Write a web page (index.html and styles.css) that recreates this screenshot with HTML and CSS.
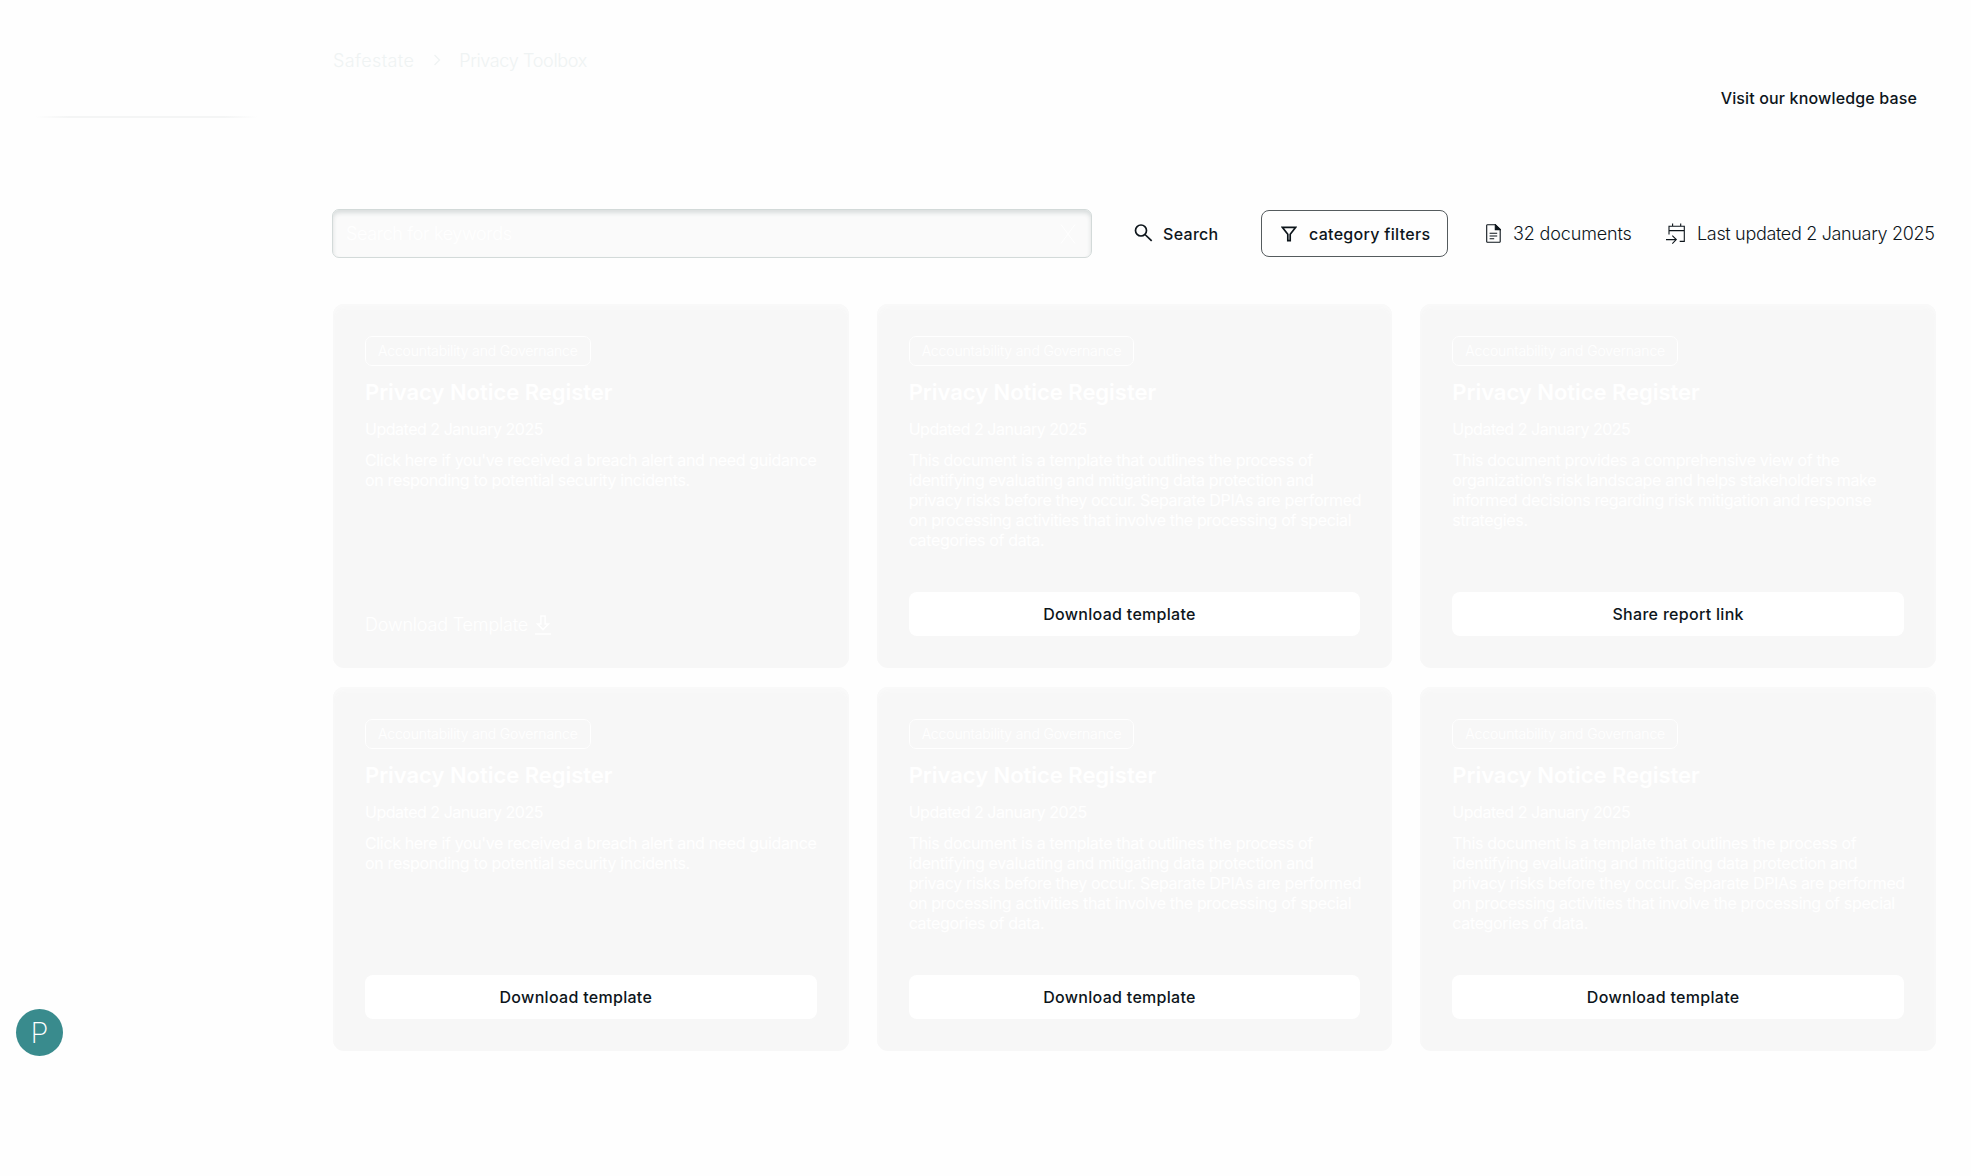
FILE: index.html
```
<!DOCTYPE html>
<html lang="en">
	<head>
		<meta charset="utf-8"/>
		<title>Privacy Toolbox</title>
		<link rel="stylesheet" href="styles.css">
	</head>
	<body>
		<aside class="sidebar">
			<div class="divider"></div>
			<div class="avatar">P</div>
		</aside>
		<main>
			<nav class="breadcrumb">
				<a class="crumb">Safestate</a>
				<svg class="chevron" width="8" height="12" viewBox="0 0 8 12"><path d="M1.5 1l5 5-5 5"/></svg>
				<a class="crumb current">Privacy Toolbox</a>
			</nav>
			<div class="knowledge"><a>Visit our knowledge base</a></div>

			<div class="toolbar">
				<div class="search">
					<span>Search for keywords</span>
					<svg width="16" height="20" viewBox="0 0 16 20"><path d="M1 .5l14 19M15 .5L1 19.5"/></svg>
				</div>
				<button class="search-btn" type="button">
					<svg width="19" height="19" viewBox="0 0 19 19"><circle cx="7" cy="6.5" r="5.5"/><path d="M11 10.5l6.7 6.4"/></svg>
					<span>Search</span>
				</button>
				<button class="filter-btn" type="button">
					<svg width="16" height="16" viewBox="0 0 16 16"><path d="M1.3 1.3h13.4L9.2 8.2v6.5H6.8V8.2z"/></svg>
					<span>category filters</span>
				</button>
				<div class="info docs">
					<svg width="15" height="19" viewBox="0 0 15 19"><path d="M1.6.7h7.7l4.9 4.9v11.8a.9.9 0 0 1-.9.9H1.6a.9.9 0 0 1-.9-.9V1.6a.9.9 0 0 1 .9-.9zM3.6 9.2h7.6M3.6 12h7.6M3.6 14.8h4.6"/><path class="fill" d="M9.3.7v4.9h4.9z"/></svg>
					<span>32 documents</span>
				</div>
				<div class="info updated">
					<svg width="19" height="21" viewBox="0 0 19 21"><path d="M3 11.5V3.2h15.3v15.2h-4.6M3 7.6h15.3M6.6 3.2V.5M14.7 3.2V.5M0 16.6h10.2M6.3 12.6l4 4-4 4"/></svg>
					<span>Last updated 2 January 2025</span>
				</div>
			</div>

			<div class="cards">
				<article class="card">
					<span class="tag">Accountability and Governance</span>
					<h2>Privacy Notice Register</h2>
					<p class="date">Updated 2 January 2025</p>
					<p class="desc">Click here if you've received a breach alert and need guidance<br>on responding to potential security incidents.</p>
					<a class="link"><span>Download Template</span><svg width="16" height="20" viewBox="0 0 16 20"><path d="M5.9 1h4.2v8h3.4L8 14.6 2.5 9h3.4zM0 19h16"/></svg></a>
				</article>
				<article class="card">
					<span class="tag">Accountability and Governance</span>
					<h2>Privacy Notice Register</h2>
					<p class="date">Updated 2 January 2025</p>
					<p class="desc">This document is a template that outlines the process of<br>identifying evaluating and mitigating data protection and<br>privacy risks before they occur. Separate DPIAs are performed<br>on processing activities that involve the processing of special<br>categories of data.</p>
					<button class="action" type="button">Download template</button>
				</article>
				<article class="card">
					<span class="tag">Accountability and Governance</span>
					<h2>Privacy Notice Register</h2>
					<p class="date">Updated 2 January 2025</p>
					<p class="desc">This document provides a comprehensive view of the<br>organization’s risk landscape and helps stakeholders make<br>informed decisions regarding risk mitigation and response<br>strategies.</p>
					<button class="action share" type="button">Share report link</button>
				</article>
				<article class="card">
					<span class="tag">Accountability and Governance</span>
					<h2>Privacy Notice Register</h2>
					<p class="date">Updated 2 January 2025</p>
					<p class="desc">Click here if you've received a breach alert and need guidance<br>on responding to potential security incidents.</p>
					<button class="action" type="button">Download template</button>
				</article>
				<article class="card">
					<span class="tag">Accountability and Governance</span>
					<h2>Privacy Notice Register</h2>
					<p class="date">Updated 2 January 2025</p>
					<p class="desc">This document is a template that outlines the process of<br>identifying evaluating and mitigating data protection and<br>privacy risks before they occur. Separate DPIAs are performed<br>on processing activities that involve the processing of special<br>categories of data.</p>
					<button class="action" type="button">Download template</button>
				</article>
				<article class="card">
					<span class="tag">Accountability and Governance</span>
					<h2>Privacy Notice Register</h2>
					<p class="date">Updated 2 January 2025</p>
					<p class="desc">This document is a template that outlines the process of<br>identifying evaluating and mitigating data protection and<br>privacy risks before they occur. Separate DPIAs are performed<br>on processing activities that involve the processing of special<br>categories of data.</p>
					<button class="action" type="button">Download template</button>
				</article>
			</div>
		</main>
	</body>
</html>
```
FILE: styles.css
```
* {
	box-sizing: border-box;
}
body {
	margin: 0;
	min-height: 1176px;
	display: flex;
	background: #fefefe;
	font-family: Inter, "Liberation Sans", sans-serif;
	font-size: 16px;
	color: #0d151b;
}
button {
	border: 0;
	background: transparent;
	font: inherit;
	font-weight: 500;
	letter-spacing: 0.3px;
	color: inherit;
	padding: 0;
}
svg {
	flex: none;
	fill: none;
	stroke: currentColor;
	stroke-width: 1.3;
}
.sidebar {
	flex: none;
	width: 333px;
	height: 1176px;
	padding: 116px 0 120px 16px;
	display: flex;
	flex-direction: column;
	justify-content: space-between;
}
.divider {
	width: 223px;
	height: 2px;
	margin-left: 19px;
	background: linear-gradient(90deg, #fefefe, #f4f5f5 15%, #f4f5f5 85%, #fefefe);
}
.avatar {
	width: 47px;
	height: 47px;
	border-radius: 50%;
	background: #398b8d;
	color: #fff;
	font-size: 29px;
	font-weight: 200;
	line-height: 48px;
	text-align: center;
}
main {
	flex: none;
	width: 1603px;
	padding-top: 48px;
}
.breadcrumb {
	display: flex;
	align-items: center;
	height: 24px;
	font-size: 18px;
	font-weight: 300;
	letter-spacing: 0.38px;
	color: #eff3f3;
}
.chevron {
	margin: 0 18px 0 19px;
}
.current {
	letter-spacing: -0.35px;
}
.knowledge {
	height: 24px;
	margin-top: 14px;
	padding-right: 19px;
	line-height: 24px;
	text-align: right;
	font-weight: 500;
	letter-spacing: 0.15px;
}
.toolbar {
	display: flex;
	align-items: center;
	height: 49px;
	margin: 99px 0 46px -1px;
	white-space: nowrap;
}
.search {
	flex: none;
	display: flex;
	align-items: center;
	justify-content: space-between;
	width: 760px;
	height: 49px;
	padding: 0 15px 0 13px;
	border: 1px solid #d3dad9;
	border-radius: 7px;
	background: #fafafa;
	box-shadow: inset 0 3px 4px #d9dddd;
	color: #fff;
	font-size: 18px;
	font-weight: 300;
	letter-spacing: -0.35px;
}
.search svg {
	stroke-width: 0.9;
}
.search-btn,
.filter-btn,
.info {
	flex: none;
	display: flex;
	align-items: center;
}
.search-btn {
	width: 84px;
	margin-left: 42px;
}
.search-btn svg {
	margin-right: 10px;
	stroke-width: 1.7;
}
.filter-btn {
	width: 187px;
	height: 47px;
	margin-left: 43px;
	padding-left: 19px;
	border: 1px solid #555b5e;
	border-radius: 8px;
}
.filter-btn svg {
	margin-right: 12px;
	stroke-width: 1.7;
}
.info {
	font-size: 18px;
	font-weight: 350;
	letter-spacing: -0.15px;
}
.docs {
	width: 145px;
	margin-left: 38px;
}
.docs svg {
	margin-right: 12px;
	stroke-width: 1.1;
}
.docs .fill {
	fill: currentColor;
}
.updated {
	margin-left: 35px;
	letter-spacing: -0.33px;
}
.updated svg {
	margin-right: 12px;
	stroke-width: 1.1;
}
.cards {
	display: grid;
	grid-template-columns: repeat(3, minmax(0, 1fr));
	gap: 19px 28px;
}
.card {
	display: flex;
	flex-direction: column;
	align-items: flex-start;
	height: 364px;
	padding: 32px;
	border-radius: 11px;
	background: #f7f7f7;
	box-shadow: inset 0 4px 3px #f9f9f9;
	color: #fff;
	white-space: nowrap;
}
.tag {
	height: 30px;
	padding: 0 12px;
	border: 1px solid #fff;
	border-radius: 7px;
	font-size: 14px;
	font-weight: 300;
	line-height: 28px;
	letter-spacing: -0.14px;
}
.card h2 {
	margin: 11px 0 0;
	font-size: 22px;
	font-weight: 600;
	line-height: 30px;
	letter-spacing: -0.03px;
}
.date {
	margin: 11px 0 0;
	line-height: 22px;
	letter-spacing: -0.48px;
}
.desc {
	margin: 10px 0 0;
	line-height: 20px;
	letter-spacing: -0.35px;
}
.link {
	display: flex;
	align-items: center;
	gap: 7px;
	margin: auto 0 1px;
	font-size: 18px;
	font-weight: 300;
	letter-spacing: -0.18px;
}
.link svg {
	stroke-width: 1.5;
}
.action {
	width: 100%;
	height: 44px;
	margin-top: auto;
	padding-right: 30px;
	border-radius: 8px;
	background: #fff;
	color: #0d151b;
}
.share {
	padding-right: 0;
}
```
